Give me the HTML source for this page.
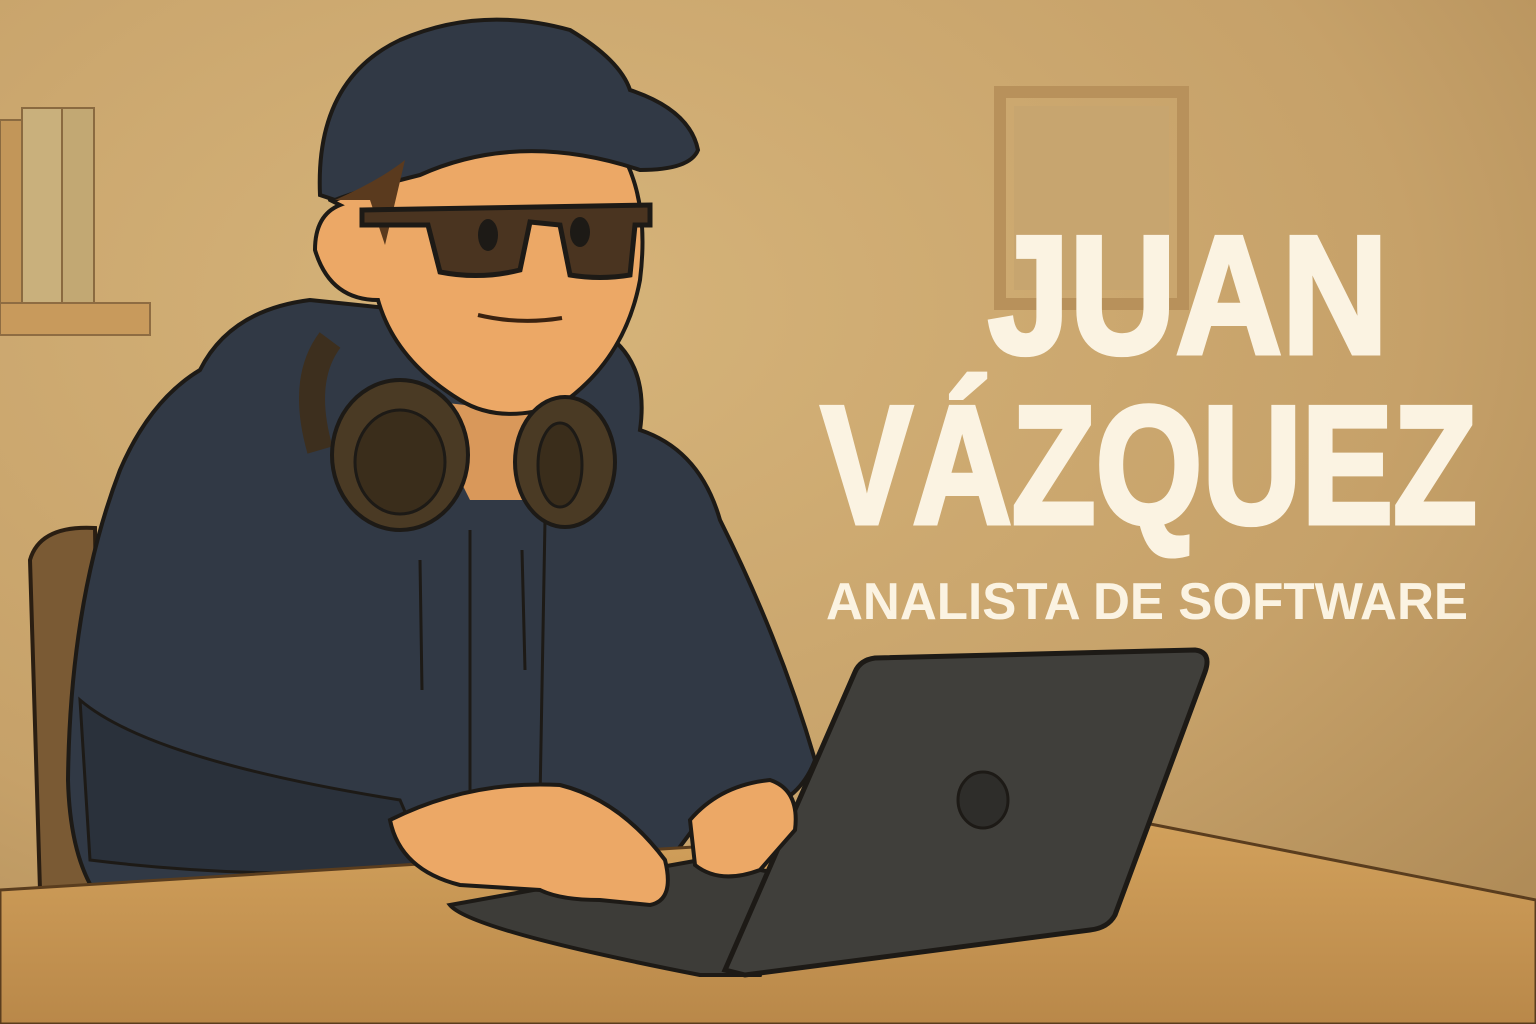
<!DOCTYPE html>
<html><head><meta charset="utf-8"><style>html,body{margin:0;padding:0;width:1536px;height:1024px;overflow:hidden}svg{display:block}</style></head>
<body>
<svg width="1536" height="1024" viewBox="0 0 1536 1024" xmlns="http://www.w3.org/2000/svg">
<defs>
<radialGradient id="bg" cx="0.35" cy="0.3" r="0.95">
<stop offset="0" stop-color="#d6b47a"/><stop offset="0.6" stop-color="#c6a169"/><stop offset="1" stop-color="#a98552"/>
</radialGradient>
<linearGradient id="tb" x1="0" y1="0" x2="0" y2="1"><stop offset="0" stop-color="#d2a15c"/><stop offset="1" stop-color="#b98849"/></linearGradient>
</defs>
<rect width="1536" height="1024" fill="url(#bg)"/>
<rect x="0" y="120" width="22" height="185" fill="#c29659" stroke="#8a6a40" stroke-width="2"/>
<rect x="22" y="108" width="40" height="197" fill="#c9b07c" stroke="#8a6a40" stroke-width="2"/>
<rect x="62" y="108" width="32" height="197" fill="#c2a873" stroke="#8a6a40" stroke-width="2"/>
<rect x="0" y="303" width="150" height="32" fill="#c89a5c" stroke="#8e6c42" stroke-width="2"/>
<rect x="1000" y="92" width="183" height="212" fill="none" stroke="#b8915b" stroke-width="12"/>
<rect x="1014" y="106" width="155" height="184" fill="#c7a56f"/>
<path d="M30 560 Q40 525 95 528 L100 890 L40 890 Z" fill="#7a5a34" stroke="#2a1e12" stroke-width="4"/>
<path d="M200 370 Q230 310 310 300 L600 330 Q650 360 640 430 Q700 450 720 520 Q780 640 815 760 Q800 800 760 810 L700 820 L640 900 L100 900 Q70 860 68 780 Q70 600 120 470 Q150 400 200 370 Z" fill="#313945" stroke="#1d1a16" stroke-width="4"/>
<path d="M80 700 Q150 760 400 800 L430 870 Q250 880 90 860 Z" fill="#2a313b" stroke="#1d1a16" stroke-width="3"/>
<path d="M470 530 L470 800 M545 520 L540 800" stroke="#1d1a16" stroke-width="3" fill="none"/>
<path d="M420 560 L422 690 M522 550 L525 670" stroke="#1d1a16" stroke-width="3" fill="none"/>
<path d="M420 400 L600 420 L560 500 L470 500 Z" fill="#d9985a"/>
<path d="M330 200 Q320 170 340 150 L620 150 Q650 200 640 280 Q625 360 560 405 Q500 425 460 400 Q395 360 378 300 Q330 300 315 250 Q315 215 340 205 Z" fill="#eca866" stroke="#1d1a16" stroke-width="4"/>
<path d="M320 195 Q315 80 400 40 Q480 5 570 30 Q620 60 630 90 Q690 110 698 150 Q690 170 640 170 Q520 130 420 175 Q360 190 335 200 Z" fill="#313945" stroke="#1d1a16" stroke-width="4"/>
<path d="M335 200 Q380 180 405 160 L385 245 L370 200 Z" fill="#5a3a1e"/>
<path d="M362 210 L650 205 L650 225 L635 225 L630 275 Q600 280 570 275 L560 225 L530 222 L520 270 Q480 280 440 272 L428 225 L362 225 Z" fill="#4a3420" stroke="#1d1a16" stroke-width="5"/>
<ellipse cx="488" cy="235" rx="10" ry="16" fill="#1d1a16"/><ellipse cx="580" cy="232" rx="10" ry="15" fill="#1d1a16"/>
<path d="M478 315 Q520 325 562 318" stroke="#3a2210" stroke-width="4" fill="none"/>
<path d="M330 340 Q300 380 320 450" stroke="#3d2f1e" stroke-width="26" fill="none"/>
<ellipse cx="400" cy="455" rx="68" ry="75" fill="#4a3a24" stroke="#1d1a16" stroke-width="4"/>
<ellipse cx="400" cy="462" rx="45" ry="52" fill="#3a2d1b" stroke="#1d1a16" stroke-width="3"/>
<ellipse cx="565" cy="462" rx="50" ry="65" fill="#4a3a24" stroke="#1d1a16" stroke-width="4"/>
<ellipse cx="560" cy="465" rx="22" ry="42" fill="#3a2d1b" stroke="#1d1a16" stroke-width="3"/>
<path d="M0 890 L1130 820 L1536 900 L1536 1024 L0 1024 Z" fill="url(#tb)" stroke="#5a3d1e" stroke-width="3"/>
<path d="M450 905 L700 860 L790 875 L760 975 L700 975 Q470 930 450 905 Z" fill="#3d3c38" stroke="#1d1a16" stroke-width="4"/>
<path d="M725 970 L855 672 Q860 660 875 658 L1195 650 Q1212 652 1205 672 L1115 915 Q1108 928 1090 930 L745 975 Z" fill="#403f3b" stroke="#1d1a16" stroke-width="5"/>
<ellipse cx="983" cy="800" rx="25" ry="28" fill="#2e2d2a" stroke="#1d1a16" stroke-width="3"/>
<path d="M390 820 Q470 780 560 785 Q620 800 665 860 Q675 900 650 905 L600 900 Q560 900 540 890 L460 885 Q400 870 390 820 Z" fill="#eca866" stroke="#1d1a16" stroke-width="4"/>
<path d="M690 820 Q720 785 770 780 Q800 790 795 830 L760 870 Q720 885 695 865 Z" fill="#eca866" stroke="#1d1a16" stroke-width="4"/>
<g fill="#fbf3e2" stroke="#fbf3e2" font-family="Liberation Sans, sans-serif" font-weight="bold">
<text x="988" y="353" font-size="168" stroke-width="5" textLength="400" lengthAdjust="spacingAndGlyphs">JUAN</text>
<text x="821" y="523" font-size="168" stroke-width="5" textLength="656" lengthAdjust="spacingAndGlyphs">VÁZQUEZ</text>
<text x="826" y="619" font-size="52" stroke-width="0" textLength="642" lengthAdjust="spacingAndGlyphs">ANALISTA DE SOFTWARE</text>
</g>
</svg>
</body></html>
